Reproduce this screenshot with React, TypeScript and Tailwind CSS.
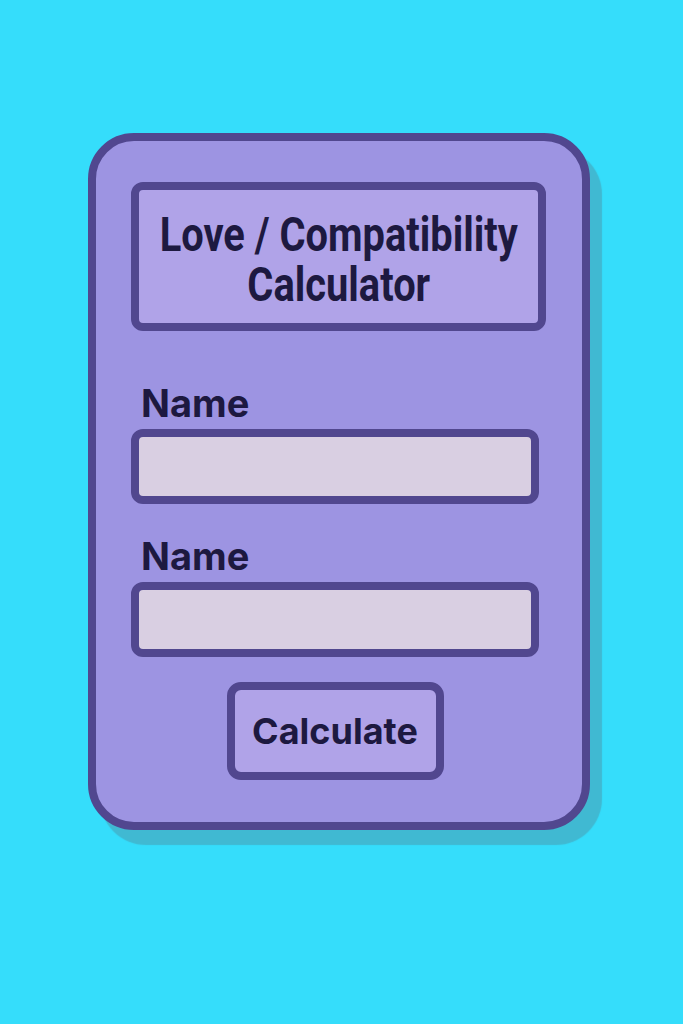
import React from "react";

function Field({ label }: { label: string }) {
  return (
    <div className="flex flex-col">
      <label className="ml-[10px] text-[38px] font-bold leading-[44px] text-[#1d1940] [font-family:Inter,'Liberation_Sans',sans-serif]">
        {label}
      </label>
      <input
        type="text"
        className="mt-[4px] h-[75px] w-[408px] rounded-[12px] border-[8px] border-[#51478f] bg-[#d9cfe2] outline-none"
      />
    </div>
  );
}

export default function App() {
  return (
    <div className="min-h-[1024px] w-full bg-[#35ddfb] pt-[133px] pl-[88px]">
      <div className="flex h-[697px] w-[502px] flex-col rounded-[46px] border-[8px] border-[#51478f] bg-[#9d94e2] pl-[35px] pt-[41px] shadow-[12px_15px_1px_#40b9d2]">
        <div className="flex h-[149px] w-[415px] flex-col items-center justify-center rounded-[12px] border-[8px] border-[#51478f] bg-[#b0a3e8] pt-[6px] text-center text-[#1d1940]">
          {/* condensed heading: no narrow face installed, so squeeze a regular one */}
          <h1 className="flex scale-x-[0.83] flex-col items-center whitespace-nowrap text-[48px] font-bold leading-[50px] [font-family:Roboto,'Liberation_Sans',sans-serif]">
            <span>Love / Compatibility</span>
            <span>Calculator</span>
          </h1>
        </div>

        <div className="mt-[50px] flex flex-col gap-[30px]">
          <Field label="Name" />
          <Field label="Name" />
        </div>

        <div className="mt-[25px] flex w-[408px] justify-center">
          <button
            type="button"
            className="h-[98px] w-[217px] rounded-[14px] border-[8px] border-[#51478f] bg-[#b0a3e8] text-[36px] font-bold text-[#1d1940] [font-family:Inter,'Liberation_Sans',sans-serif]"
          >
            Calculate
          </button>
        </div>
      </div>
    </div>
  );
}
